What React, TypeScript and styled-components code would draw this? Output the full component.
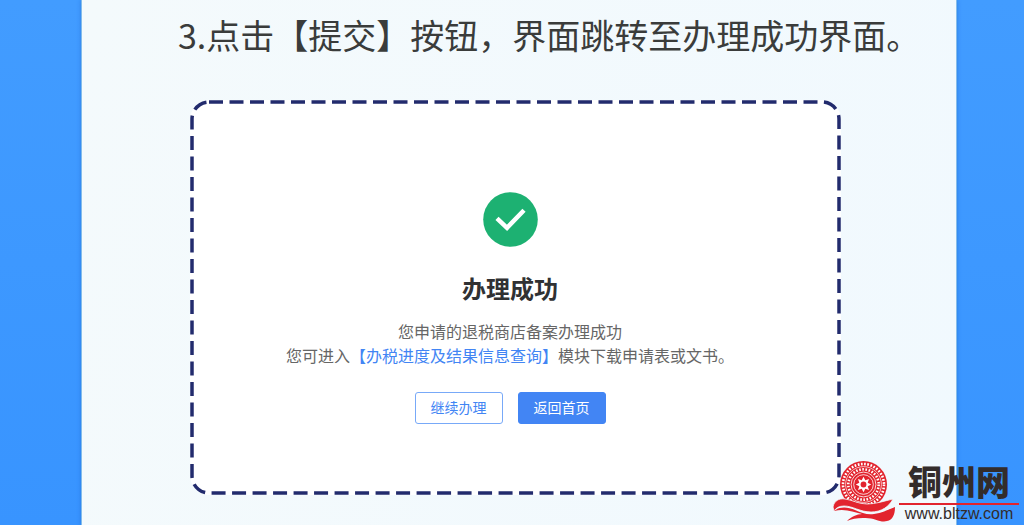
import React from 'react';
import styled, { createGlobalStyle } from 'styled-components';

const GlobalStyle = createGlobalStyle`
  * { box-sizing: border-box; }
  body {
    margin: 0;
    background: #3d98ff;
    font-family: "Noto Sans CJK SC", "Noto Sans", sans-serif;
    overflow: hidden;
  }
`;

const Page = styled.div`
  position: relative;
  min-height: 100vh;
  display: flex;
  padding: 0 67px 0 81px;
  background: linear-gradient(#429cff, #3894ff);
`;

const Paper = styled.main`
  flex: 1;
  min-width: 0;
  padding: 10px 115px 31px 108px;
  background: linear-gradient(100deg, #f4fafc, #f1f9fe);
  border: solid #84bcea;
  border-width: 0 1px;
  box-shadow: 0 0 4px rgba(20, 90, 190, 0.45);
`;

const Step = styled.h1`
  margin: 0 -80px 0 -12px;
  font-size: 34px;
  line-height: 50px;
  font-weight: 400;
  color: #3a3c3b;
  white-space: nowrap;
`;

const Card = styled.section`
  position: relative;
  display: flex;
  flex-direction: column;
  align-items: center;
  margin-top: 40px;
  padding: 92px 11px 71px 0;
  background: #fff;
  border-radius: 20px;
`;

const DashedFrame = styled.svg`
  position: absolute;
  inset: 0;
  width: 100%;
  height: 100%;
  padding: 2px;
  overflow: visible;
  pointer-events: none;
`;

const SuccessIcon = styled.svg`
  width: 55px;
  height: 55px;
  flex: none;
`;

const ResultTitle = styled.h2`
  margin: 23px 0 13px;
  font-size: 24px;
  line-height: 36px;
  font-weight: 700;
  color: #303133;
`;

const Message = styled.p`
  margin: 0;
  font-size: 16px;
  line-height: 24px;
  color: #666;
  white-space: nowrap;
`;

const ModuleLink = styled.a`
  color: #4285f4;
  text-decoration: none;
`;

const Actions = styled.div`
  display: flex;
  gap: 15px;
  margin-top: 25px;
`;

const Button = styled.button<{ $primary?: boolean }>`
  width: 88px;
  height: 32px;
  padding: 0 0 2px;
  border: 1px solid ${(p) => (p.$primary ? '#4285f4' : '#78a9f8')};
  border-radius: 3px;
  background: ${(p) => (p.$primary ? '#4285f4' : '#fff')};
  color: ${(p) => (p.$primary ? '#fff' : '#4285f4')};
  font-family: inherit;
  font-size: 14px;
  line-height: 20px;
`;

const Brand = styled.aside`
  position: absolute;
  right: 5px;
  bottom: 3px;
  display: flex;
  align-items: flex-end;
  gap: 4px;
`;

const Emblem = styled.svg`
  width: 62px;
  height: 62px;
`;

const BrandText = styled.div`
  width: 120px;
  text-align: center;
  color: #332c2b;
`;

const BrandName = styled.div`
  padding-bottom: 3px;
  font-size: 34px;
  line-height: 38px;
  font-weight: 900;
  border-bottom: 2px solid #e2242e;
`;

const BrandUrl = styled.div`
  font-family: "Liberation Sans", Arial, sans-serif;
  font-size: 16px;
  line-height: 18px;
`;

export default function App() {
  return (
    <Page>
      <GlobalStyle />
      <Paper>
        <Step>3.点击【提交】按钮，界面跳转至办理成功界面。</Step>
        <Card>
          <DashedFrame aria-hidden="true">
            <rect width="100%" height="100%" rx="17" fill="none" stroke="#222b6d" strokeWidth="3.5" strokeDasharray="14 6.5" />
          </DashedFrame>
          <SuccessIcon viewBox="0 0 55 55" aria-hidden="true">
            <circle cx="27.5" cy="27.5" r="27.3" fill="#1db172" />
            <path d="M14 26.3 24 35.8 41 18.3" fill="none" stroke="#fff" strokeWidth="4.5" />
          </SuccessIcon>
          <ResultTitle>办理成功</ResultTitle>
          <Message>您申请的退税商店备案办理成功</Message>
          <Message>
            您可进入<ModuleLink href="#query">【办税进度及结果信息查询】</ModuleLink>模块下载申请表或文书。
          </Message>
          <Actions>
            <Button type="button">继续办理</Button>
            <Button type="button" $primary>返回首页</Button>
          </Actions>
        </Card>
      </Paper>
      <Brand>
        <Emblem viewBox="0 0 62 62" aria-hidden="true">
          <circle cx="30.5" cy="23.5" r="23.5" fill="#e2242e" />
          <g fill="none" stroke="#fff">
            <circle cx="30.5" cy="23.5" r="20.5" strokeWidth="2.6" strokeDasharray="1.7 1.52" />
            <circle cx="30.5" cy="23.5" r="17.9" strokeWidth=".7" />
            <circle cx="30.5" cy="23.5" r="15.2" strokeWidth="2.6" strokeDasharray="1.6 1.58" />
            <circle cx="30.5" cy="23.5" r="12.4" strokeWidth=".8" />
            <circle cx="30.5" cy="23.5" r="9.8" strokeWidth=".8" />
          </g>
          <path
            d="m30.5 15.8 1.8 3.5 3.7-1.3-1.3 3.7 3.5 1.8-3.5 1.8 1.3 3.7-3.7-1.3-1.8 3.5-1.8-3.5-3.7 1.3 1.3-3.7-3.5-1.8 3.5-1.8-1.3-3.7 3.7 1.3Z"
            fill="#fff"
          />
          <circle cx="30.5" cy="23.5" r="2.9" fill="#e2242e" />
          <path
            d="M0 46C1 40 6 37 12 38C20 39 25 43 34 43C43 43 51 40 60 38C56 46 48 51 38 51C27 51 20 45 11 45C6 45 3 47 1 50Z"
            fill="#e2242e"
            stroke="#f4fafc"
            strokeWidth=".8"
          />
          <path
            d="M1 50C7 45 15 46 22 49C29 52 34 54 41 53C50 52 56 48 62 46C62 53 60 59 54 60C47 62 41 56 30 57C24 57 18 58 14 60C18 56 24 53 29 53C20 51 12 47 1 50Z"
            fill="#e2242e"
          />
        </Emblem>
        <BrandText>
          <BrandName>铜州网</BrandName>
          <BrandUrl>www.bltzw.com</BrandUrl>
        </BrandText>
      </Brand>
    </Page>
  );
}
